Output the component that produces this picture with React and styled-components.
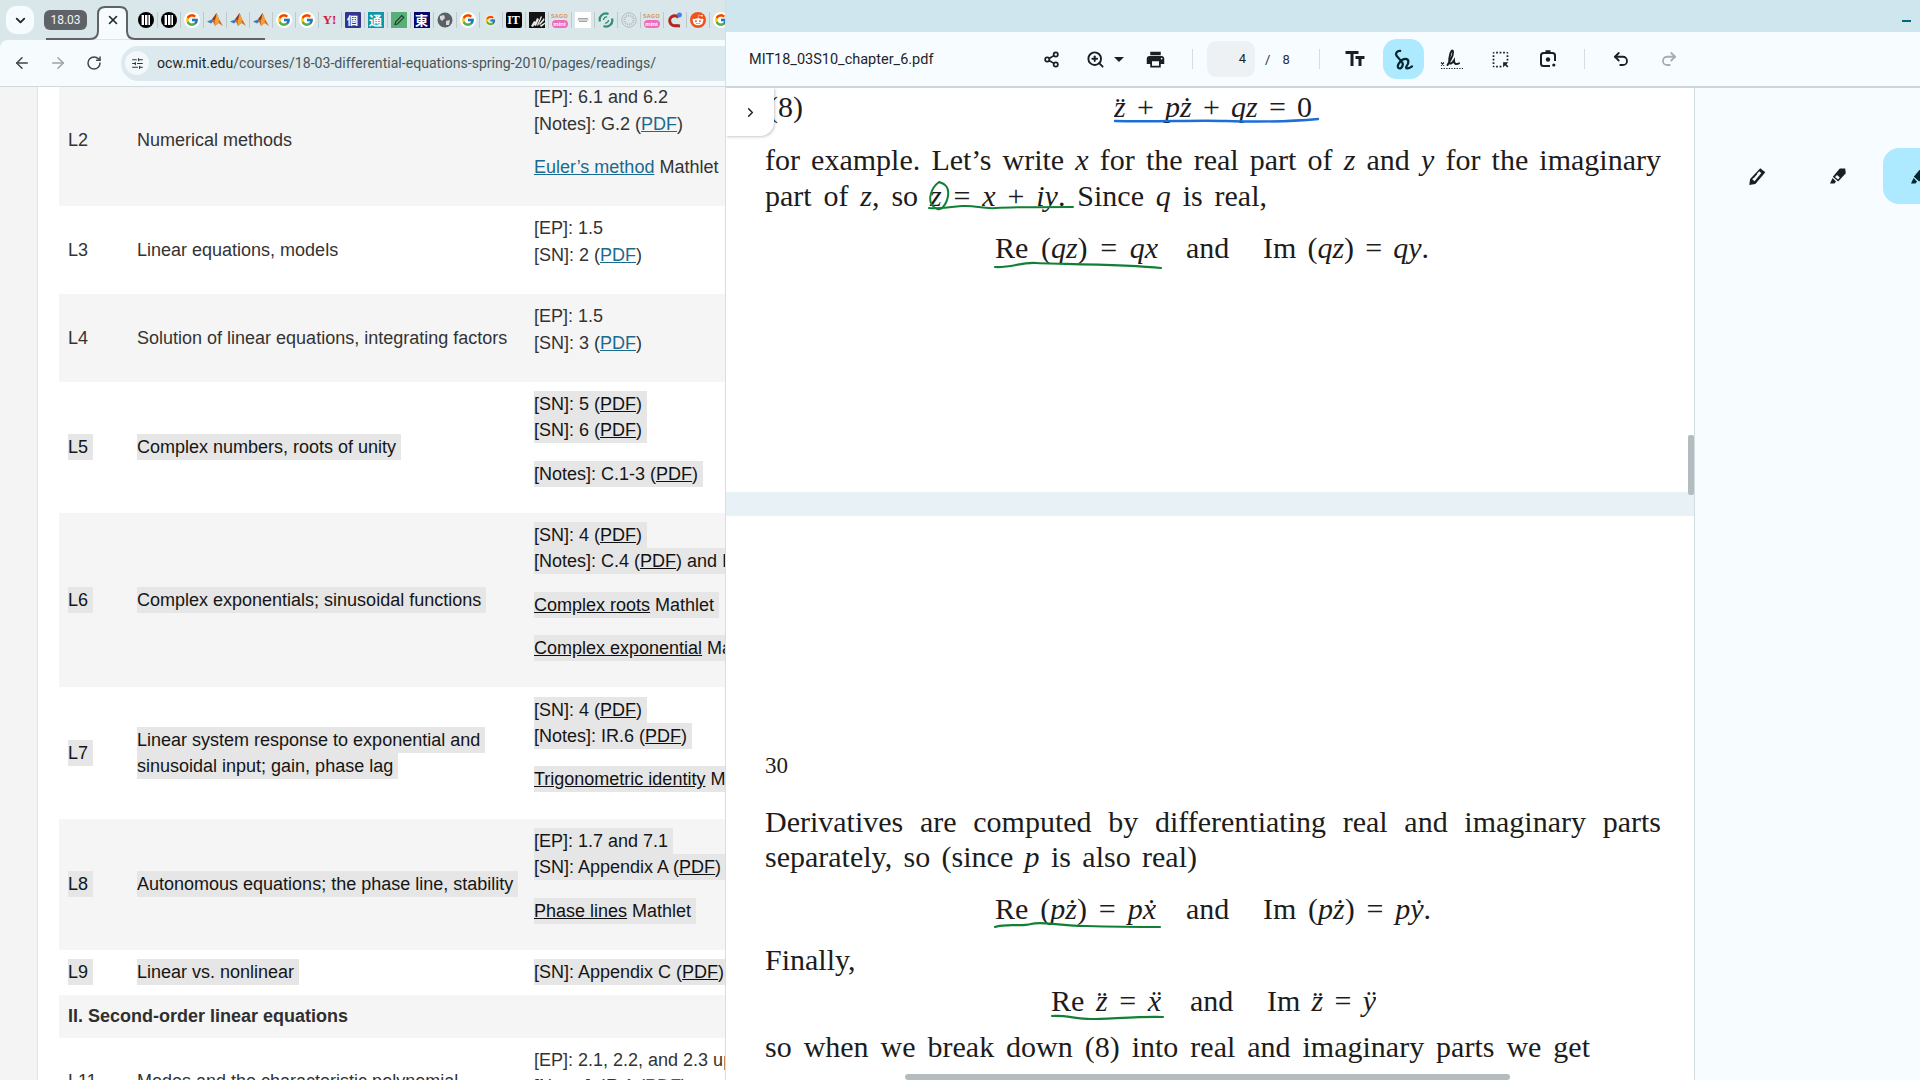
import React from "react";
import styled, { createGlobalStyle } from "styled-components";
import { ArrowLeft, ArrowRight, RotateCw, ChevronDown, ChevronRight, X, SlidersHorizontal, Share2, ZoomIn, Undo2, Redo2 } from "lucide-react";
import { FcGoogle } from "react-icons/fc";
import { FaRedditAlien } from "react-icons/fa";
import { MdPrint, MdOutlineHighlightAlt, MdTextFields } from "react-icons/md";

const Global = createGlobalStyle`
  html, body { margin: 0; padding: 0; width: 1920px; height: 1080px; overflow: hidden; background: #fff; }
  #root { width: 1920px; height: 1080px; }
  * { box-sizing: border-box; }
`;

const Desktop = styled.div`display: flex; width: 1920px; height: 1080px; overflow: hidden; font-family: Roboto, "Liberation Sans", sans-serif;`;

/* ---------- left browser window ---------- */
const BrowserWin = styled.div`width: 725px; flex: none; display: flex; flex-direction: column; background: #d9e6ea; overflow: hidden;`;
const TabStrip = styled.div`position: relative; height: 40px; flex: none; display: flex; align-items: flex-start; padding: 6px 0 0 6px; overflow: hidden;`;
const TabSearch = styled.div`width: 28px; height: 28px; flex: none; border-radius: 10px; background: #f6fbfd; display: flex; align-items: center; justify-content: center; color: #1f2a2e;`;
const GroupChip = styled.div`margin: 4px 0 0 10px; width: 43px; height: 20px; flex: none; border-radius: 6px; background: #5f6368; color: #f1f3f4; font-size: 12px; line-height: 20px; text-align: center;`;
const TabShape = styled.svg`position: absolute; left: 0; top: 0;`;
const ActiveTab = styled.div`position: relative; z-index: 1; margin-left: 11px; width: 30px; height: 28px; flex: none; display: flex; align-items: center; justify-content: center; color: #1f2a2e;`;
const FavRow = styled.div`position: relative; z-index: 1; display: flex; flex: none; margin: 6px 0 0 6.5px;`;
const FavSlot = styled.div`
  position: relative; width: 23px; height: 16px; flex: none; display: flex; align-items: center; justify-content: center;
  border-right: 1px solid #bfc9cc;
`;
const FavBox = styled.div`
  width: 16px; height: 16px; display: flex; align-items: center; justify-content: center; overflow: hidden;
  background: ${p => p.$bg || "transparent"}; color: ${p => p.$fg || "#fff"}; border-radius: ${p => p.$r || 0};
  font-family: ${p => p.$serif ? '"Liberation Serif", "Noto Sans CJK JP", serif' : '"Noto Sans CJK JP", "Liberation Sans", sans-serif'};
  font-size: ${p => p.$fs || 12}px; font-weight: 700; line-height: 16px;
`;
const SagoBox = styled.div`width: 16px; height: 16px; display: flex; flex-direction: column; align-items: center; font-family: "Liberation Sans", sans-serif; font-weight: 700; line-height: 7px;`;
const SagoTop = styled.span`font-size: 5.5px; color: #d9924a; letter-spacing: .2px; height: 8px; line-height: 8px;`;
const SagoPill = styled.span`font-size: 6px; line-height: 8px; height: 8px; width: 16px; border-radius: 4px; background: #f26bb8; color: #fff; text-align: center;`;

const UrlBar = styled.div`height: 47px; flex: none; background: #f6fbfd; border-top-left-radius: 8px; border-bottom: 1px solid #cfdade; display: flex; align-items: center; padding: 0 0 0 12px;`;
const NavBtn = styled.div`width: 20px; flex: none; display: flex; justify-content: center; margin-right: 16px; color: ${p => p.$off ? "#9aa5a9" : "#3c4649"};`;
const Pill = styled.div`flex: 1; margin-left: 1px; margin-right: -40px; height: 35px; border-radius: 18px; background: #dce9ee; display: flex; align-items: center; padding-left: 4px;`;
const SiteBtn = styled.div`width: 24px; height: 24px; flex: none; border-radius: 50%; background: #f3f8fa; display: flex; align-items: center; justify-content: center; color: #2b3437;`;
const UrlText = styled.div`margin-left: 8px; font-size: 14.1px; color: #4a5558; white-space: nowrap;`;
const UrlHost = styled.span`color: #1d2528;`;

const PageScroll = styled.div`flex: 1; display: flex; background: #f4f4f4; overflow: hidden; font-family: "Liberation Sans", Arial, sans-serif;`;
const Gutter = styled.div`width: 38px; flex: none; background: #f4f4f4; box-shadow: inset -1px 0 1px #e3e3e3;`;
const Sheet = styled.div`flex: 1; background: #fff; padding-left: 21px; overflow: hidden;`;
const Table = styled.div`margin-top: -12px; width: 667px;`;
const Row = styled.div`
  display: grid; grid-template-columns: 69px 397px 1fr; align-items: center; padding-left: 9px;
  background: ${p => p.$alt ? "#f5f5f5" : "#fff"};
  font-size: 18px; line-height: 26.4px; color: #333; white-space: nowrap; overflow: hidden;
`;
const Readings = styled.div`padding: 9.2px 0 ${p => p.$tight ? "9.4px" : "25.8px"}; min-width: 0;`;
const HeadRow = styled.div`height: 43px; display: flex; align-items: center; padding-left: 9px; background: #f5f5f5; font-size: 18px; font-weight: 700; color: #2f2f2f;`;
const Para = styled.div`margin-top: ${p => p.$first ? 0 : "17px"};`;
const Ln = styled.div`height: 26.4px;`;
const Mark = styled.span`display: inline-block; line-height: 26.4px; height: 26px; padding-right: 5px; background: #e6e6e6; color: #151515;`;
const Link = styled.span`color: #1b6a8f; text-decoration: underline;`;
const DarkLink = styled.span`color: #111; text-decoration: underline;`;

/* ---------- right PDF window ---------- */
const PdfWin = styled.div`flex: 1; display: flex; flex-direction: column; border-left: 1px solid #d4dfe3; background: #f6fcff; min-width: 0;`;
const TitleBar = styled.div`height: 32px; flex: none; background: #cfe6ee; display: flex; justify-content: flex-end; align-items: flex-end; padding: 0 9px 10px 0;`;
const MinDash = styled.div`width: 9px; height: 2px; background: #00687c;`;
const Toolbar = styled.div`height: 56px; flex: none; background: #f6fcff; border-bottom: 2px solid #ccd6da; display: flex; align-items: center; color: #1a1f22;`;
const FileName = styled.div`width: 309px; flex: none; padding: 1px 0 0 23px; font-size: 14.5px; color: #1f2427; white-space: nowrap;`;
const Tool = styled.div`
  width: ${p => p.$w || 40}px; height: 40px; margin-right: ${p => p.$mr || 0}px; flex: none; display: flex; align-items: center; justify-content: center;
  border-radius: 14px; background: ${p => p.$on ? "#ade9ff" : "transparent"}; color: ${p => p.$off ? "#a6adb0" : p.$on ? "#04262f" : "#1a1f22"};
`;
const Caret = styled.div`width: 0; height: 0; border-left: 5px solid transparent; border-right: 5px solid transparent; border-top: 5px solid #1a1f22;`;
const Sep = styled.div`width: 1px; height: 20px; background: #d6dcdf; flex: none; margin: 0 ${p => p.$r || 0}px 0 ${p => p.$l || 0}px;`;
const PageBox = styled.div`width: 48px; height: 36px; border-radius: 9px; background: #edf1f4; font-size: 13px; line-height: 36px; text-align: right; padding-right: 9px; flex: none;`;
const PageOf = styled.div`font-size: 13px; display: flex; gap: 12px; margin-left: 10px; width: 38px; flex: none; color: #2a2f32;`;

const Body = styled.div`flex: 1; display: flex; min-height: 0;`;
const Viewer = styled.div`position: relative; width: 968px; flex: none; background: #e8f1f5; overflow: hidden;`;
const PdfPage = styled.div`
  height: ${p => p.$h}px; margin-bottom: ${p => p.$mb || 0}px; background: #fff; padding-left: 39px; overflow: hidden;
  font-family: "Liberation Serif", "Times New Roman", serif; font-size: 30px; color: #1c1c1c;
`;
const Just = styled.div`
  width: ${p => p.$w}px; height: 36px; line-height: 36px; margin-top: ${p => p.$mt || 0}px; white-space: normal; text-align: justify; text-align-last: justify; overflow: hidden;
`;
const PageNo = styled.div`height: 36px; line-height: 36px; margin-top: 232px; font-size: 23px;`;
const Eq = styled.div`display: flex; height: 36px; line-height: 36px; margin-top: ${p => p.$mt || 0}px;`;
const Seg = styled.div`width: ${p => p.$w}px; margin-left: ${p => p.$ml || 0}px; flex: none; text-align: justify; text-align-last: justify; height: 36px; overflow: hidden;`;
const M = styled.i`font-style: italic;`;
const InkLayer = styled.svg`position: absolute; left: 0; top: -1px; pointer-events: none;`;
const Drawer = styled.div`position: absolute; left: 0; top: 0; width: 48px; height: 48px; background: #fff; border-bottom-right-radius: 14px; box-shadow: 1px 1px 3px rgba(0,0,0,.22); display: flex; align-items: center; justify-content: center; color: #1f2427;`;
const VThumb = styled.div`position: absolute; right: 0; top: 347px; width: 6px; height: 60px; background: #b4bcc0; border-radius: 2px;`;
const HThumb = styled.div`position: absolute; left: 179px; bottom: 0; width: 605px; height: 6px; background: #b4bcc0; border-radius: 3px;`;

const Panel = styled.div`flex: 1; background: #f6fcff; border-left: 1px solid #d2dde1; display: flex; gap: 9px; padding: 60px 0 0 26px; overflow: hidden; align-items: flex-start;`;
const PanelBtn = styled.div`width: 72px; height: 56px; flex: none; border-radius: 16px; display: flex; align-items: center; justify-content: center; background: ${p => p.$on ? "#ade9ff" : "transparent"}; color: ${p => p.$on ? "#04262f" : "#1a1f22"};`;

/* ---------- drawings ---------- */
const Pause = () => (
  <svg width="16" height="16" viewBox="0 0 16 16"><circle cx="8" cy="8" r="8" fill="#000" /><rect x="3.6" y="3" width="2.4" height="10" fill="#fff" /><rect x="7" y="3" width="2.4" height="10" fill="#fff" /><rect x="10.4" y="3" width="1.6" height="10" fill="#fff" /></svg>
);
const Matlab = () => (
  <svg width="16" height="16" viewBox="0 0 16 16"><path d="M0 9.5 5 7.4 7 8.8 4 11.6Z" fill="#3a7cc0" /><path d="M5 7.5 9.6 1 12 7 16 14 11.5 11 8 14Z" fill="#d9682a" /><path d="M9.6 1 8 8 8 14 11.5 11 12 7Z" fill="#f0a23a" /><path d="M5 7.5 9.6 1 8 8Z" fill="#8c3b22" /></svg>
);
const G = () => <FavBox $bg="#fff" $r="50%"><FcGoogle size={14} /></FavBox>;
const Pencil = () => (
  <svg width="16" height="16" viewBox="0 0 16 16"><rect width="16" height="16" fill="#5aaf78" /><path d="M4 12.5 4.6 10 10.8 3.6 12.8 5.6 6.4 12Z" fill="none" stroke="#173f28" strokeWidth="1.1" /></svg>
);
const Globe = () => (
  <svg width="16" height="16" viewBox="0 0 16 16"><circle cx="8" cy="8" r="7.5" fill="#5c6064" /><path d="M3 4 7 3 8 6 5 9 3 7ZM9 9 13 8 12 13 9 13Z" fill="#d5d8da" /></svg>
);
const Fan = () => (
  <svg width="16" height="16" viewBox="0 0 16 16"><rect width="16" height="16" fill="#141414" /><path d="M2 14 5 9 7 10 4 15ZM5 13 8 6 10 7 7 14ZM8 13 12 4 13 5 9 14ZM10 12 15 6 15.5 8 11 13ZM11 13.5 16 10.5 16 12 12 15Z" fill="#e8e8e8" /></svg>
);
const WhiteCard = () => (
  <svg width="16" height="16" viewBox="0 0 16 16"><rect width="16" height="16" fill="#fff" /><path d="M3 6.5h10M2.5 8h11M4 9.5h8" stroke="#9a9a9a" strokeWidth=".9" /></svg>
);
const Swirl = () => (
  <svg width="16" height="16" viewBox="0 0 16 16" fill="none" stroke="#2f8f6f" strokeWidth="2.2"><path d="M2 9.5A6.2 6.2 0 0 1 10.5 2" /><path d="M14 6.5A6.2 6.2 0 0 1 5.5 14" /><path d="M5.5 8A3 3 0 0 1 9 5M10.5 8A3 3 0 0 1 7 11" strokeWidth="1.3" /></svg>
);
const Seal = () => (
  <svg width="16" height="16" viewBox="0 0 16 16" fill="none" stroke="#b4bcbe"><circle cx="8" cy="8" r="7.2" /><circle cx="8" cy="8" r="4.6" strokeDasharray="1 1" strokeWidth="2" /></svg>
);
const RedQ = () => (
  <svg width="16" height="16" viewBox="0 0 16 16" fill="none"><path d="M11.5 5.5A5 5 0 1 0 9 13.6L13 14" stroke="#b3261e" strokeWidth="3" /><circle cx="12.5" cy="3" r="2.4" fill="#3f7fe8" /></svg>
);
const Sago = () => <SagoBox><SagoTop>SAGO</SagoTop><SagoPill>mini</SagoPill></SagoBox>;

const favicons = [
  <Pause />, <Pause />, <G />, <Matlab />, <Matlab />, <Matlab />, <G />, <G />,
  <FavBox $fg="#d6173f" $serif $fs={13}>Y!</FavBox>,
  <FavBox $bg="#34348c" $fs={11} $r="1px">個</FavBox>,
  <FavBox $bg="#0f97a8" $fs={13}>通</FavBox>,
  <Pencil />,
  <FavBox $bg="#07076e" $fs={13}>東</FavBox>,
  <Globe />, <G />, <FavBox $bg="#dfe8ea" $r="50%"><FcGoogle size={11} /></FavBox>,
  <FavBox $bg="#000" $serif $fs={12} $r="2px">IT</FavBox>,
  <Fan />, <Sago />, <WhiteCard />, <Swirl />, <Seal />, <Sago />, <RedQ />,
  <FavBox $bg="#f0521e" $r="50%"><FaRedditAlien size={12} /></FavBox>,
  <G />,
];

const Scribble = () => (
  <svg width="21" height="21" viewBox="4 2 15 16" fill="none" stroke="currentColor" strokeWidth="1.7" strokeLinecap="round" strokeLinejoin="round"><path d="M9 3.5C6.8 3.3 5 5 6.2 7.2L10.4 12C12 14.4 9.6 18 7.6 16.4 6 14.6 9.8 9.6 13 9.6 16 9.6 15.6 13.2 13.8 15.2 12.6 17.2 14.8 17.4 18 15.2" /></svg>
);
const SignIcon = () => (
  <svg width="24" height="22" viewBox="0 0 24 22" fill="none" stroke="currentColor"><path d="M1 14.5 4 17.5M4 14.5 1 17.5" strokeWidth="1.1" /><path d="M7.5 17C10 13 14.5 5 12.8 2.8 10.8 1.5 9.2 9 9.2 14 9.6 17.4 12.6 14.6 14 12.5 14 15.5 15.4 17 19 15.4" strokeWidth="2" strokeLinecap="round" /><path d="M1 20.5H23" strokeWidth="1.2" strokeDasharray="1.3 1.3" /></svg>
);
const Lens = () => (
  <svg width="20" height="20" viewBox="0 0 20 20" fill="none" stroke="currentColor" strokeWidth="2"><path d="M12 17H5.5A2.5 2.5 0 0 1 3 14.5V6.5A2.5 2.5 0 0 1 5.5 4H14.5A2.5 2.5 0 0 1 17 6.5V12" /><path d="M7.5 2.2H12.5" /><circle cx="10" cy="10.5" r="2.2" fill="currentColor" stroke="none" /><circle cx="15.8" cy="16" r="1.6" fill="currentColor" stroke="none" /></svg>
);
const PenIcon = () => (
  <svg width="19" height="19" viewBox="0 0 18 18"><path d="M11.6 1.2 16.4 5 7 16 1.2 17 2 11.4Z" fill="currentColor" /><path d="M10.6 4 4 11.6 6.2 13.4 12.6 5.6Z" fill="#f6fcff" /><path d="M8.4 6.4 5 10.4" stroke="#1a1f22" strokeWidth="1" /></svg>
);
const HighlighterIcon = ({ solid }) => (
  <svg width="18" height="18" viewBox="0 0 18 18"><path d="M10.8 1.4 16.2 1.6 16.8 6.2 9.2 14.4 3.8 9.8Z" fill="currentColor" />{!solid && <path d="M6 10 9 12.6 10.8 10.6 8 8Z" fill="#f6fcff" />}<path d="M3.6 11 7 14.4 5.4 16.6H1Z" fill="currentColor" /></svg>
);

const ROWS = [
  { id: "L2", alt: true, title: ["Numerical methods"], paras: [[<>[EP]: 6.1 and 6.2</>, <>[Notes]: G.2 (<Link>PDF</Link>)</>], [<><Link>Euler’s method</Link> Mathlet</>]] },
  { id: "L3", title: ["Linear equations, models"], paras: [[<>[EP]: 1.5</>, <>[SN]: 2 (<Link>PDF</Link>)</>]] },
  { id: "L4", alt: true, title: ["Solution of linear equations, integrating factors"], paras: [[<>[EP]: 1.5</>, <>[SN]: 3 (<Link>PDF</Link>)</>]] },
  { id: "L5", mark: true, title: ["Complex numbers, roots of unity"], paras: [[<>[SN]: 5 (<DarkLink>PDF</DarkLink>)</>, <>[SN]: 6 (<DarkLink>PDF</DarkLink>)</>], [<>[Notes]: C.1-3 (<DarkLink>PDF</DarkLink>)</>]] },
  { id: "L6", alt: true, mark: true, title: ["Complex exponentials; sinusoidal functions"], paras: [[<>[SN]: 4 (<DarkLink>PDF</DarkLink>)</>, <>[Notes]: C.4 (<DarkLink>PDF</DarkLink>) and IR.6 (PDF)</>], [<><DarkLink>Complex roots</DarkLink> Mathlet</>], [<><DarkLink>Complex exponential</DarkLink> Mathlet</>]] },
  { id: "L7", mark: true, title: ["Linear system response to exponential and", "sinusoidal input; gain, phase lag"], paras: [[<>[SN]: 4 (<DarkLink>PDF</DarkLink>)</>, <>[Notes]: IR.6 (<DarkLink>PDF</DarkLink>)</>], [<><DarkLink>Trigonometric identity</DarkLink> Mathlet</>]] },
  { id: "L8", alt: true, mark: true, title: ["Autonomous equations; the phase line, stability"], paras: [[<>[EP]: 1.7 and 7.1</>, <>[SN]: Appendix A (<DarkLink>PDF</DarkLink>)</>], [<><DarkLink>Phase lines</DarkLink> Mathlet</>]] },
  { id: "L9", mark: true, tight: true, title: ["Linear vs. nonlinear"], paras: [[<>[SN]: Appendix C (<DarkLink>PDF</DarkLink>)</>]] },
  { head: "II. Second-order linear equations" },
  { id: "L11", title: ["Modes and the characteristic polynomial"], paras: [[<>[EP]: 2.1, 2.2, and 2.3 up to p. 125</>, <>[Notes]: IR.1 (<Link>PDF</Link>)</>]] },
];

const Txt = ({ mark, children }) => (mark ? <Mark>{children}</Mark> : <span>{children}</span>);

const LectureRow = ({ r }) => (
  <Row $alt={r.alt}>
    <div><Txt mark={r.mark}>{r.id}</Txt></div>
    <div>{r.title.map((t, i) => <Ln key={i}><Txt mark={r.mark}>{t}</Txt></Ln>)}</div>
    <Readings $tight={r.tight}>
      {r.paras.map((p, i) => (
        <Para key={i} $first={i === 0}>
          {p.map((l, j) => <Ln key={j}><Txt mark={r.mark}>{l}</Txt></Ln>)}
        </Para>
      ))}
    </Readings>
  </Row>
);

export default function App() {
  return (
    <Desktop>
      <Global />
      <BrowserWin>
        <TabStrip>
          <TabShape width="270" height="40" viewBox="0 0 270 40">
            <path d="M90 39Q98 39 98 31V14Q98 7 105 7H120Q127 7 127 14V31Q127 39 135 39Z" fill="#f6fbfd" />
            <path d="M46 39H90Q98 39 98 31V14Q98 7 105 7H120Q127 7 127 14V31Q127 39 135 39H265" fill="none" stroke="#5f6368" strokeWidth="2" />
          </TabShape>
          <TabSearch><ChevronDown size={15} strokeWidth={3} /></TabSearch>
          <GroupChip>18.03</GroupChip>
          <ActiveTab><X size={14} strokeWidth={2.8} /></ActiveTab>
          <FavRow>{favicons.map((f, i) => <FavSlot key={i}>{f}</FavSlot>)}</FavRow>
        </TabStrip>
        <UrlBar>
          <NavBtn><ArrowLeft size={18} /></NavBtn>
          <NavBtn $off><ArrowRight size={18} /></NavBtn>
          <NavBtn><RotateCw size={16} strokeWidth={2.2} /></NavBtn>
          <Pill>
            <SiteBtn><SlidersHorizontal size={13} /></SiteBtn>
            <UrlText><UrlHost>ocw.mit.edu</UrlHost>/courses/18-03-differential-equations-spring-2010/pages/readings/</UrlText>
          </Pill>
        </UrlBar>
        <PageScroll>
          <Gutter />
          <Sheet>
            <Table>
              {ROWS.map((r, i) => r.head ? <HeadRow key={i}>{r.head}</HeadRow> : <LectureRow key={i} r={r} />)}
            </Table>
          </Sheet>
        </PageScroll>
      </BrowserWin>

      <PdfWin>
        <TitleBar><MinDash /></TitleBar>
        <Toolbar>
          <FileName>MIT18_03S10_chapter_6.pdf</FileName>
          <Tool $w={32} $mr={16}><Share2 size={17} strokeWidth={2.4} /></Tool>
          <Tool $w={24} $mr={3}><ZoomIn size={19} strokeWidth={2.4} /></Tool>
          <Tool $w={18} $mr={11}><Caret /></Tool>
          <Tool $w={32}><MdPrint size={21} /></Tool>
          <Sep $l={21} $r={14} />
          <PageBox>4</PageBox>
          <PageOf><span>/</span><span>8</span></PageOf>
          <Sep $l={16} $r={14} />
          <Tool $w={42} $mr={7}><MdTextFields size={24} /></Tool>
          <Tool $w={41} $on $mr={8}><Scribble /></Tool>
          <Tool $w={40} $mr={8}><SignIcon /></Tool>
          <Tool $w={40} $mr={8}><MdOutlineHighlightAlt size={21} /></Tool>
          <Tool $w={40}><Lens /></Tool>
          <Sep $l={16} $r={16} />
          <Tool $w={40} $mr={8}><Undo2 size={18} strokeWidth={2.4} /></Tool>
          <Tool $w={40} $off><Redo2 size={18} strokeWidth={2.4} /></Tool>
        </Toolbar>
        <Body>
          <Viewer>
            <PdfPage $h={404} $mb={24}>
              <Eq $mt={1}>
                <Seg $w={35} $ml={3}>(8)</Seg>
                <Seg $w={198} $ml={311}><M>z̈</M> + <M>pż</M> + <M>qz</M> = 0</Seg>
              </Eq>
              <Just $w={896} $mt={17}>for example. Let’s write <M>x</M> for the real part of <M>z</M> and <M>y</M> for the imaginary</Just>
              <Just $w={502}>part of <M>z</M>, so <M>z</M> = <M>x</M> + <M>iy</M>. Since <M>q</M> is real,</Just>
              <Eq $mt={16}>
                <Seg $w={163} $ml={230}>Re (<M>qz</M>) = <M>qx</M></Seg>
                <Seg $w={46} $ml={28}>and</Seg>
                <Seg $w={166} $ml={31}>Im (<M>qz</M>) = <M>qy</M>.</Seg>
              </Eq>
            </PdfPage>
            <PdfPage $h={564}>
              <PageNo>30</PageNo>
              <Just $w={896} $mt={20}>Derivatives are computed by differentiating real and imaginary parts</Just>
              <Just $w={432} $mt={-1}>separately, so (since <M>p</M> is also real)</Just>
              <Eq $mt={16}>
                <Seg $w={161} $ml={230}>Re (<M>pż</M>) = <M>pẋ</M></Seg>
                <Seg $w={46} $ml={30}>and</Seg>
                <Seg $w={168} $ml={31}>Im (<M>pż</M>) = <M>pẏ</M>.</Seg>
              </Eq>
              <Just $w={96} $mt={15}>Finally,</Just>
              <Eq $mt={5}>
                <Seg $w={110} $ml={286}>Re <M>z̈</M> = <M>ẍ</M></Seg>
                <Seg $w={46} $ml={29}>and</Seg>
                <Seg $w={109} $ml={31}>Im <M>z̈</M> = <M>ÿ</M></Seg>
              </Eq>
              <Just $w={825} $mt={10}>so when we break down (8) into real and imaginary parts we get</Just>
            </PdfPage>
            <InkLayer width="968" height="993" viewBox="0 0 968 993" fill="none" strokeLinecap="round">
              <path d="M389 34C430 35 470 33 500 34S570 34 592 32" stroke="#1b6fd6" strokeWidth="2.4" />
              <path d="M213 95C205 101 202 112 206 118 209 122 214 124 217 120 223 113 224 102 219 98 217 96 215 96 213 95" stroke="#118037" strokeWidth="2" />
              <path d="M203 121C212 122 222 120 236 119S255 122 270 121 325 120 347 120" stroke="#118037" strokeWidth="2" />
              <path d="M269 180C285 181 295 175 310 176S400 177 435 181" stroke="#118037" strokeWidth="2.2" />
              <path d="M269 840C282 836 295 840 305 837S325 838 360 839 410 840 434 840" stroke="#118037" strokeWidth="2.2" />
              <path d="M326 929C340 928 350 932 365 932S420 929 437 930" stroke="#118037" strokeWidth="2.2" />
            </InkLayer>
            <Drawer><ChevronRight size={15} strokeWidth={2.4} /></Drawer>
            <VThumb />
            <HThumb />
          </Viewer>
          <Panel>
            <PanelBtn><PenIcon /></PanelBtn>
            <PanelBtn><HighlighterIcon /></PanelBtn>
            <PanelBtn $on><HighlighterIcon solid /></PanelBtn>
          </Panel>
        </Body>
      </PdfWin>
    </Desktop>
  );
}
